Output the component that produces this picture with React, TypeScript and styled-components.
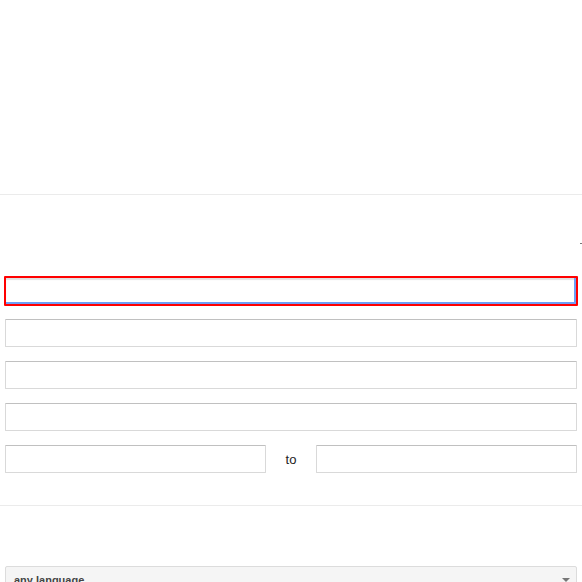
import React from "react";
import styled, { createGlobalStyle } from "styled-components";

const Global = createGlobalStyle`
  html, body { margin: 0; padding: 0; background: #fff; }
  body { font-family: Arial, "Liberation Sans", sans-serif; color: #222; overflow: hidden; }
  * { box-sizing: border-box; }
`;

const Page = styled.div`
  width: 582px;
  height: 582px;
  overflow: hidden;
`;

const Header = styled.div`
  height: 195px;
  border-bottom: 1px solid #ebebeb;
`;

const Section = styled.div`
  padding: 0 5px;
  border-bottom: 1px solid #ebebeb;
`;

const HintRow = styled.div`
  height: 82px;
  display: flex;
  justify-content: flex-end;
  align-items: flex-start;
  padding-top: 48px;
  margin-right: -5px;
`;

const HintMark = styled.span`
  width: 2px;
  height: 1px;
  background: #777;
`;

const Field = styled.input<{ $focused?: boolean }>`
  display: block;
  width: 100%;
  height: 28px;
  margin: 0 0 14px;
  padding: 0 8px;
  font: 13px Arial, "Liberation Sans", sans-serif;
  background: #fff;
  border: 1px solid #d9d9d9;
  border-top-color: #c0c0c0;
  border-radius: 1px;
  outline: none;
  ${(p) =>
    p.$focused &&
    `
    border: 2px solid #ff0000;
    box-shadow: inset -2px -2px 0 #6d9ef5, inset 0 2px 1px rgba(0,0,0,0.12);
    height: 30px;
    margin-top: -1px;
    margin-bottom: 13px;
    margin-left: -1px;
    width: calc(100% + 2px);
  `}
`;

const RangeRow = styled.div`
  display: grid;
  grid-template-columns: 261px 50px 261px;
  align-items: center;
  margin-bottom: 32px;
  & > input { margin: 0; }
`;

const To = styled.span`
  text-align: center;
  font-size: 13px;
  color: #222;
`;

const SelectSection = styled.div`
  padding: 60px 5px 0;
`;

const Select = styled.div`
  height: 27px;
  display: flex;
  align-items: center;
  justify-content: space-between;
  padding: 0 6px 0 8px;
  background: #f5f5f5;
  border: 1px solid #dcdcdc;
  border-radius: 2px;
  font-size: 11px;
  font-weight: bold;
  color: #444;
`;

const Arrow = styled.span`
  width: 0;
  height: 0;
  border-left: 4px solid transparent;
  border-right: 4px solid transparent;
  border-top: 4px solid #777;
`;

export default function App() {
  return (
    <Page>
      <Global />
      <Header />
      <Section>
        <HintRow>
          <HintMark />
        </HintRow>
        <Field $focused aria-label="all these words" />
        <Field aria-label="this exact word or phrase" />
        <Field aria-label="any of these words" />
        <Field aria-label="none of these words" />
        <RangeRow>
          <Field aria-label="numbers ranging from" />
          <To>to</To>
          <Field aria-label="numbers ranging to" />
        </RangeRow>
      </Section>
      <SelectSection>
        <Select>
          <span>any language</span>
          <Arrow />
        </Select>
      </SelectSection>
    </Page>
  );
}
